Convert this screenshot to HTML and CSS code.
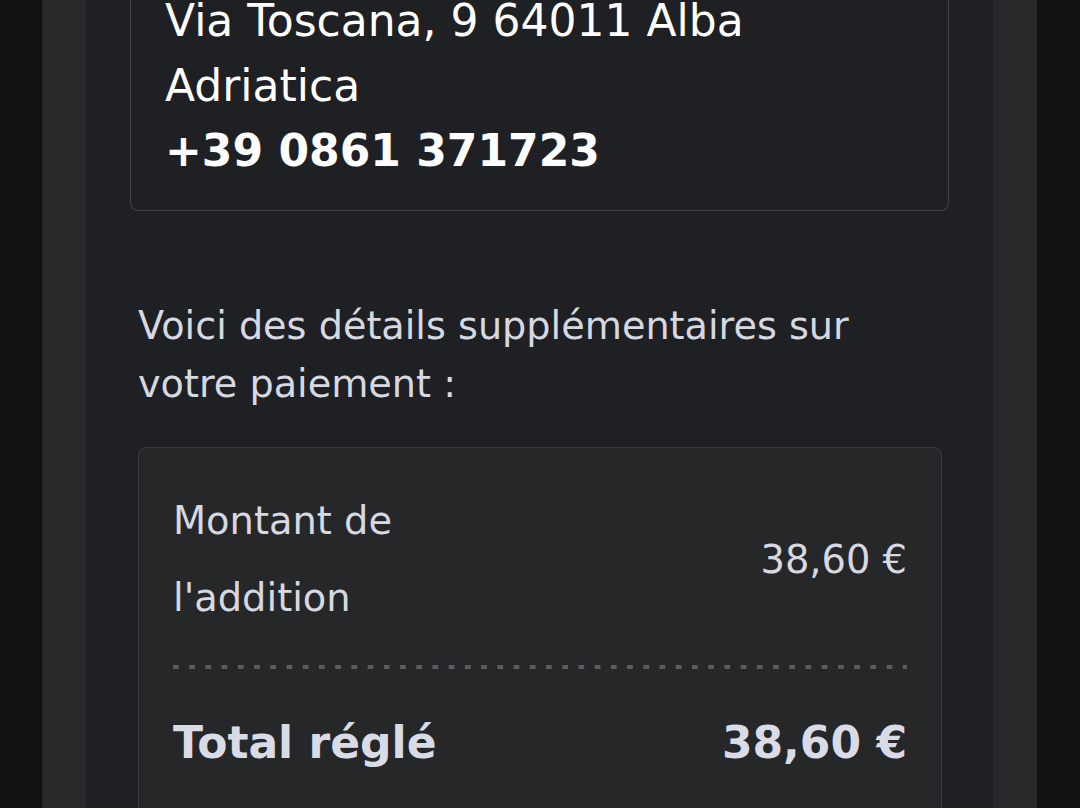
FILE: index.html
```html
<!DOCTYPE html>
<html lang="fr">

<head>
    <meta charset="UTF-8">
    <meta name="viewport" content="width=device-width, initial-scale=1.0">
    <title>Reçu de paiement</title>
    <link rel="stylesheet" href="styles.css">
</head>

<body>

    <div class="shell">
        <div class="card">

            <div class="address-box">
                <p class="address">Via Toscana, 9 64011 Alba Adriatica</p>
                <p class="phone">+39 0861 371723</p>
            </div>

            <div class="details">
                <p class="intro">Voici des détails supplémentaires sur votre paiement :</p>

                <div class="summary">
                    <div class="row">
                        <span class="label">Montant de<br>l'addition</span>
                        <span class="amount">38,60 €</span>
                    </div>
                    <div class="separator"></div>
                    <div class="row total">
                        <span class="label">Total réglé</span>
                        <span class="amount">38,60 €</span>
                    </div>
                </div>
            </div>

        </div>
    </div>

</body>

</html>
```

FILE: styles.css
```css
body {
    font-family: 'DejaVu Sans', Verdana, sans-serif;
    background-color: #121212;
    color: #d6d9e1;
    margin: 0;
    padding: 0;
    height: 808px;
    overflow: hidden;
}

.shell {
    margin: 0 43px 0 42px;
    padding: 0 44px;
    background-color: #28292b;
    min-height: 1000px;
}

.card {
    background-color: #1f2024;
    padding: 0 44px;
    min-height: 1000px;
}

/* the view is scrolled, the top of the box is out of sight */
.address-box {
    margin-top: -60px;
    padding: 48px 34px 27px;
    border: 1px solid #404145;
    border-top: none;
    border-radius: 0 0 8px 8px;
}

.address,
.phone {
    margin: 0;
    font-size: 44px;
    line-height: 65px;
    color: #ffffff;
}

.phone {
    font-weight: bold;
}

.details {
    padding: 0 7px 0 8px;
}

.intro {
    margin: 87px 0 34px;
    font-size: 38.2px;
    line-height: 57.6px;
    padding-right: 60px;
}

.summary {
    background-color: #262729;
    border: 1px solid #393a3e;
    border-radius: 8px;
    padding: 35px 34px 40px;
}

.row {
    display: flex;
    justify-content: space-between;
    align-items: center;
    font-size: 38.4px;
    line-height: 76.8px;
}

.separator {
    height: 4px;
    margin: 28px 0 31px;
    background: linear-gradient(90deg, #5b5c60 6px, transparent 6px) 0 0 / 16.22px 4px repeat-x;
}

.total {
    font-size: 44px;
    font-weight: bold;
    line-height: 86.4px;
    color: #d9dce6;
}
```
